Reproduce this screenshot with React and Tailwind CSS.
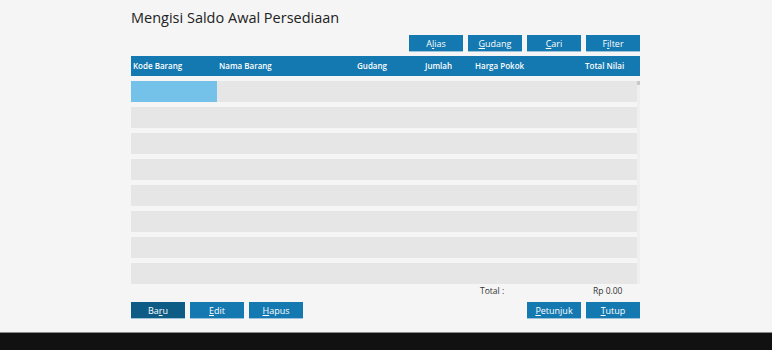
import React from "react";

const font = { fontFamily: '"Open Sans", "Noto Sans", sans-serif' };

function Btn({ children, dark }) {
  return (
    <div
      className={`flex h-[16px] w-[54px] items-center justify-center text-[9px] leading-none text-white ${
        dark ? "bg-[#0e5c86]" : "bg-[#1479b0]"
      } shadow-[0_1px_0_#9cc3da]`}
    >
      {children}
    </div>
  );
}

const U = ({ children }) => <span className="underline underline-offset-1">{children}</span>;

export default function App() {
  const rows = [0, 1, 2, 3, 4, 5, 6, 7];
  return (
    <div className="flex h-[350px] w-[772px] flex-col bg-[#f5f5f5]" style={font}>
      <div className="flex flex-1 flex-col pl-[131px] pr-[132px]">
        <div className="pt-[8px] text-[14.5px] leading-[20px] text-[#222]">Mengisi Saldo Awal Persediaan</div>
        <div className="mt-[7px] flex justify-end gap-[5px]">
          <Btn>A<U>l</U>ias</Btn>
          <Btn><U>G</U>udang</Btn>
          <Btn><U>C</U>ari</Btn>
          <Btn>F<U>i</U>lter</Btn>
        </div>
        <div className="mt-[5px] grid h-[20px] grid-cols-[86px_138px_68px_50px_110px_1fr] items-center bg-[#1479b0] text-[8px] font-semibold text-white">
          <div className="pl-[2px]">Kode Barang</div>
          <div className="pl-[2px]">Nama Barang</div>
          <div className="pl-[2px]">Gudang</div>
          <div className="pl-[2px]">Jumlah</div>
          <div className="pl-[2px]">Harga Pokok</div>
          <div className="pl-[2px]">Total Nilai</div>
        </div>
        <div className="mt-[5px] flex">
          <div className="flex flex-1 flex-col gap-[5px]">
            {rows.map((r) => (
              <div key={r} className="flex h-[21px] bg-[#e6e6e6]">
                {r === 0 && <div className="w-[86px] bg-[#74c2ea]" />}
              </div>
            ))}
          </div>
          <div className="flex w-[3px] flex-col bg-[#efefef]">
            <div className="h-[4px] bg-[#c8c8c8]" />
          </div>
        </div>
        <div className="mt-[0px] flex h-[14px] items-center text-[8.5px] text-[#333]">
          <div className="ml-[349px] w-[113px]">Total :</div>
          <div>Rp 0.00</div>
        </div>
        <div className="mt-[4px] flex gap-[5px]">
          <Btn dark>Ba<U>r</U>u</Btn>
          <Btn><U>E</U>dit</Btn>
          <Btn><U>H</U>apus</Btn>
          <div className="flex-1" />
          <Btn><U>P</U>etunjuk</Btn>
          <Btn><U>T</U>utup</Btn>
        </div>
      </div>
      <div className="h-[18px] border-t border-[#8a8a8a] bg-[#111111]" />
    </div>
  );
}
